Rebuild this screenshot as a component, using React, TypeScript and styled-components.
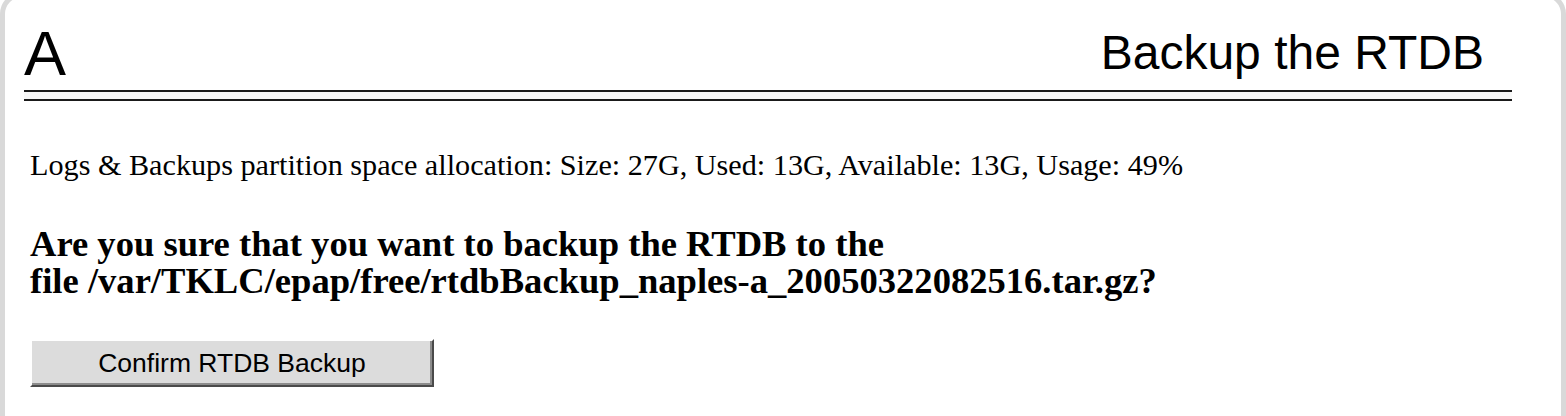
import styled, { createGlobalStyle } from 'styled-components';

const GlobalStyle = createGlobalStyle`
  html, body {
    margin: 0;
    padding: 0;
    background: #ffffff;
    overflow: hidden;
  }
`;

const Frame = styled.div`
  box-sizing: border-box;
  width: 1566px;
  height: 424px;
  margin-top: -8px;
  border: 5px solid #d9d9d9;
  border-bottom: none;
  border-radius: 22px 22px 0 0;
  background: #ffffff;
  padding: 8px 49px 0 19px;
`;

const Header = styled.div`
  display: flex;
  align-items: flex-end;
  justify-content: space-between;
  height: 85px;
  padding-right: 28px;
`;

const Letter = styled.div`
  font-family: 'Liberation Sans', Arial, sans-serif;
  font-size: 63px;
  line-height: 1;
  color: #000;
  margin-bottom: 5px;
`;

const Title = styled.h1`
  margin: 0 0 13px;
  font-family: 'Liberation Sans', Arial, sans-serif;
  font-size: 48px;
  font-weight: normal;
  line-height: 1;
  color: #000;
`;

const Rule = styled.hr`
  margin: 0;
  height: 7px;
  border: none;
  border-top: 2px solid #1a1a1a;
  border-bottom: 2px solid #1a1a1a;
  background: #f8f8f8;
`;

const Body = styled.div`
  padding: 47px 0 0 6px;
  font-family: 'Liberation Serif', 'Times New Roman', serif;
  color: #000;
`;

const Info = styled.p`
  margin: 0;
  font-size: 30.2px;
  line-height: 34px;
`;

const Question = styled.p`
  margin: 43px 0 0;
  font-size: 36.6px;
  font-weight: bold;
  line-height: 37px;
`;

const ConfirmButton = styled.button`
  box-sizing: border-box;
  display: block;
  margin-top: 40px;
  width: 404px;
  height: 48px;
  padding: 0;
  background: #dcdcdc;
  border: 2px solid;
  border-color: #ffffff #4a4a4a #4a4a4a #ffffff;
  box-shadow: inset -2px -2px 0 #8c8c8c;
  font-family: 'Liberation Sans', Arial, sans-serif;
  font-size: 26.5px;
  color: #000;
  cursor: pointer;
`;

export default function App() {
  return (
    <>
      <GlobalStyle />
      <Frame>
        <Header>
          <Letter>A</Letter>
          <Title>Backup the RTDB</Title>
        </Header>
        <Rule />
        <Body>
          <Info>
            Logs &amp; Backups partition space allocation: Size: 27G, Used: 13G, Available: 13G, Usage: 49%
          </Info>
          <Question>
            Are you sure that you want to backup the RTDB to the
            <br />
            file /var/TKLC/epap/free/rtdbBackup_naples-a_20050322082516.tar.gz?
          </Question>
          <ConfirmButton type="button">Confirm RTDB Backup</ConfirmButton>
        </Body>
      </Frame>
    </>
  );
}
